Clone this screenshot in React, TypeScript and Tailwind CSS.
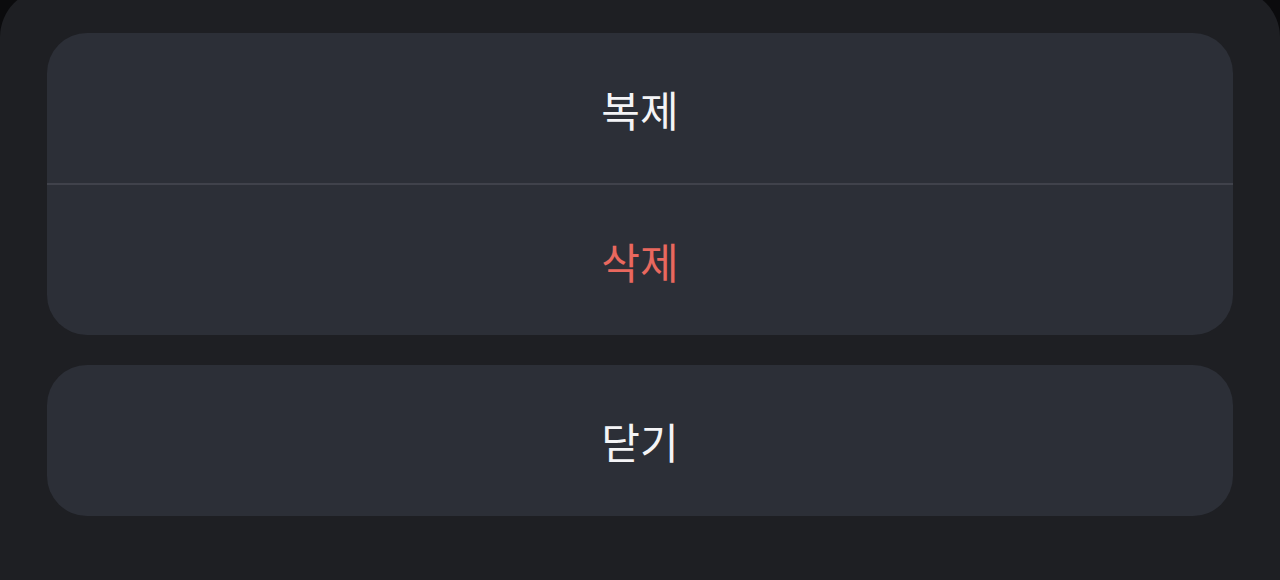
const actions = [
  { id: "duplicate", label: "복제", danger: false },
  { id: "delete", label: "삭제", danger: true },
]

export default function App() {
  return (
    <div
      className="h-[580px] w-[1280px] overflow-hidden bg-[#0b0b0d]"
      style={{ fontFamily: '"Noto Sans CJK KR", "Noto Sans", sans-serif' }}
    >
      {/* 바텀 시트 */}
      <div className="-mt-[11px] h-[600px] rounded-t-[48px] bg-[#1e1f23] px-[47px] pt-[44px]">
        <div className="flex flex-col overflow-hidden rounded-[40px] bg-[#2c2f37]">
          {actions.map((action, i) => (
            <div key={action.id} className="flex flex-col">
              {i > 0 && <div className="h-[2px] bg-[#40424b]" />}
              <button
                className={`flex h-[150px] items-center justify-center text-[42px] ${
                  action.danger ? "text-[#e9685e]" : "text-[#f4f4f6]"
                }`}
              >
                {action.label}
              </button>
            </div>
          ))}
        </div>

        <button className="mt-[30px] flex h-[151px] w-full items-center justify-center rounded-[40px] bg-[#2c2f37] text-[42px] text-[#f4f4f6]">
          닫기
        </button>
      </div>
    </div>
  )
}
